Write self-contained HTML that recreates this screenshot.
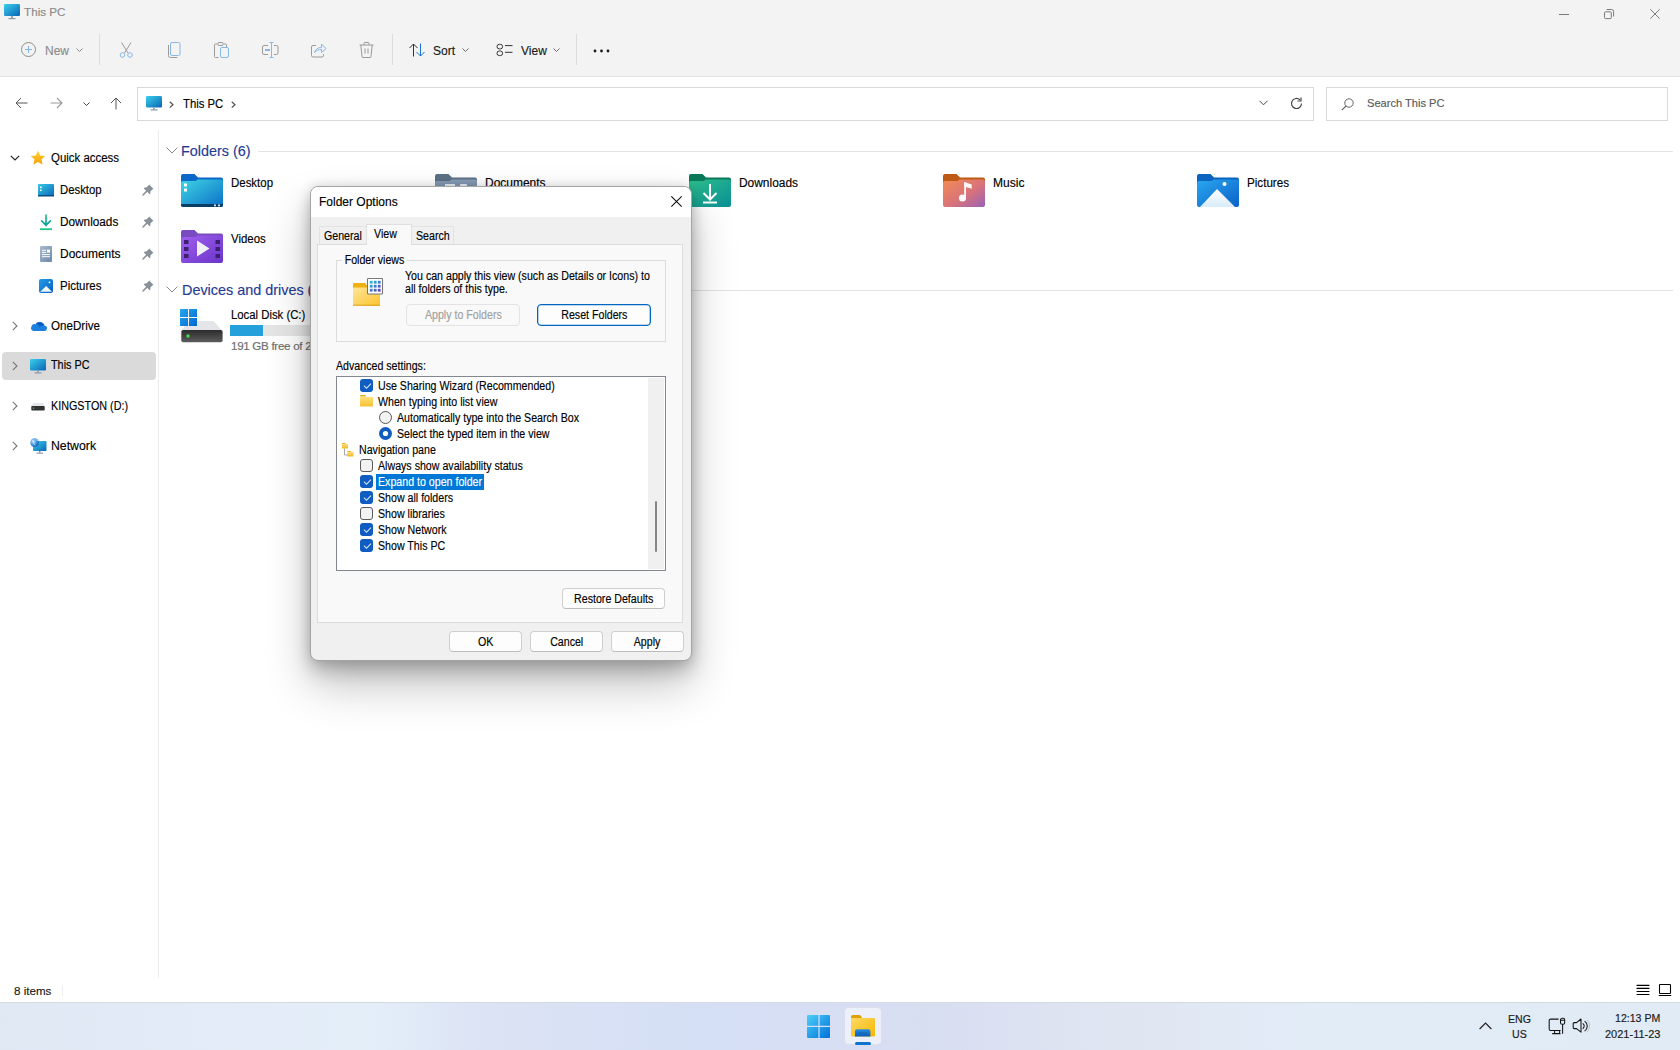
<!DOCTYPE html>
<html><head><meta charset="utf-8">
<style>
*{margin:0;padding:0;box-sizing:border-box}
html,body{-webkit-text-stroke:0.15px currentColor;width:1680px;height:1050px;overflow:hidden;background:#fff;font-family:"Liberation Sans",sans-serif;font-size:12px;color:#000}
.a{position:absolute;white-space:nowrap;line-height:1}
svg{position:absolute;overflow:visible}
#top{position:absolute;left:0;top:0;width:1680px;height:77px;background:#f3f3f3;border-bottom:1px solid #e3e3e3}
.tb{font-size:12px;color:#1c1c1c}
.box{position:absolute;border:1px solid #d9d9d9;background:#fff}
.nav{font-size:12px;color:#000}
.hdr{color:#1f3b94;font-size:14.4px}
.sep{position:absolute;background:#e5e5e5}
.fi{font-size:11.6px;color:#000}
#dlg{position:absolute;left:310px;top:186px;width:382px;height:475px;border:1px solid #a4a4a4;border-radius:8px;background:#f0f0f0;box-shadow:0 10px 18px rgba(0,0,0,.2),0 24px 46px rgba(0,0,0,.24),0 0 12px rgba(0,0,0,.12);overflow:hidden}
.d{font-size:12px;color:#000;transform:scaleX(.886);transform-origin:0 0}
.btn{position:absolute;background:#fdfdfd;border:1px solid #cfcfcf;border-bottom-color:#bdbdbd;border-radius:4px;text-align:center;font-size:12px;color:#000;white-space:nowrap}.btn span{display:inline-block;transform:scaleX(.886)}
.cb{position:absolute;width:13px;height:13px;border-radius:3px;background:#0f5dc0}
.cb:after{content:"";position:absolute;left:3.5px;top:3.8px;width:6px;height:3px;border-left:1px solid rgba(255,255,255,.85);border-bottom:1px solid rgba(255,255,255,.85);transform:rotate(-45deg)}
.cbu{position:absolute;width:13px;height:13px;border-radius:3px;background:#f2f2f2;border:1px solid #5a5a5a}
#task{position:absolute;left:0;top:1002px;width:1680px;height:48px;background:linear-gradient(90deg,#e0e8f4 0%,#e4eef9 22%,#dbe3f4 29%,#d5dff5 42%,#d8def2 55%,#dfe5f1 66%,#e2ecf7 78%,#e1ebf6 100%);border-top:1px solid #d3dae6}
</style></head>
<body>
<div id="top"></div>
<!-- title -->
<svg style="left:4px;top:4px" width="17" height="16" viewBox="0 0 17 16"><defs><linearGradient id="mon" x1="0" y1="0" x2="1" y2="1"><stop offset="0" stop-color="#3ad0ea"/><stop offset="1" stop-color="#0a64b8"/></linearGradient></defs><rect x="0" y="0" width="16" height="12" rx="1.2" fill="url(#mon)"/><rect x="7.2" y="12" width="1.6" height="2" fill="#8a97a5"/><rect x="4.5" y="14" width="7" height="1.2" fill="#8a97a5"/></svg>
<div class="a" style="left:24px;top:6px;font-size:11.7px;color:#8a8a8a">This PC</div>
<!-- window controls -->
<svg style="left:1559px;top:14px" width="10" height="1"><rect x="0" y="0" width="10" height="1" fill="#7b7b7b"/></svg>
<svg style="left:1604px;top:9px" width="10" height="10" viewBox="0 0 10 10"><rect x="0.5" y="2.8" width="6.8" height="6.8" rx="1" fill="none" stroke="#7b7b7b"/><path d="M2.6 0.5h5a2 2 0 0 1 2 2v5" fill="none" stroke="#7b7b7b"/></svg>
<svg style="left:1650px;top:9px" width="10" height="10" viewBox="0 0 10 10"><path d="M0.3 0.3L9.7 9.7M9.7 0.3L0.3 9.7" stroke="#7b7b7b" stroke-width="1"/></svg>
<!-- toolbar -->
<svg style="left:21px;top:42px" width="16" height="16" viewBox="0 0 16 16"><circle cx="7.5" cy="7.5" r="7" fill="none" stroke="#8e8e8e"/><path d="M7.5 4v7M4 7.5h7" stroke="#7fb4e6" stroke-width="1"/></svg>
<div class="a tb" style="left:45px;top:45px;color:#8c8c8c">New</div>
<svg style="left:76px;top:48px" width="7" height="4" viewBox="0 0 7 4"><path d="M0.5 0.5L3.5 3.5L6.5 0.5" fill="none" stroke="#8c8c8c"/></svg>
<div class="sep" style="left:99px;top:34px;width:1px;height:31px;background:#dcdcdc"></div>
<svg style="left:119px;top:42px" width="15" height="16" viewBox="0 0 15 16"><path d="M2.5 0.5L9 11M12 0.5L5.5 11" stroke="#9a9a9a"/><circle cx="3.5" cy="13" r="2.3" fill="none" stroke="#86b8e8"/><circle cx="11" cy="13" r="2.3" fill="none" stroke="#86b8e8"/></svg>
<svg style="left:168px;top:42px" width="13" height="16" viewBox="0 0 13 16"><rect x="2.5" y="0.5" width="9.5" height="13" rx="1.5" fill="none" stroke="#86b8e8"/><path d="M0.5 3v10.5a2 2 0 0 0 2 2h7" fill="none" stroke="#9a9a9a"/></svg>
<svg style="left:214px;top:42px" width="15" height="16" viewBox="0 0 15 16"><path d="M3.5 2h-2a1 1 0 0 0-1 1v11.5a1 1 0 0 0 1 1h3M9.5 2h2a1 1 0 0 1 1 1v2" fill="none" stroke="#9a9a9a"/><rect x="4" y="0.5" width="5" height="3" rx="1" fill="none" stroke="#9a9a9a"/><rect x="6.5" y="5.5" width="8" height="10" rx="1.5" fill="none" stroke="#86b8e8"/></svg>
<svg style="left:262px;top:42px" width="17" height="16" viewBox="0 0 17 16"><path d="M6 3.5h-4a1.5 1.5 0 0 0-1.5 1.5v6a1.5 1.5 0 0 0 1.5 1.5h4M12 3.5h2.5a1.5 1.5 0 0 1 1.5 1.5v6a1.5 1.5 0 0 1-1.5 1.5h-2.5" fill="none" stroke="#9a9a9a"/><path d="M9.5 0.5v15M7.5 0.5h4M7.5 15.5h4" stroke="#86b8e8"/><rect x="3" y="7" width="5" height="2" fill="#86b8e8"/></svg>
<svg style="left:311px;top:43px" width="16" height="15" viewBox="0 0 16 15"><path d="M5 2.5h-3a1.5 1.5 0 0 0-1.5 1.5v8.5a1.5 1.5 0 0 0 1.5 1.5h9a1.5 1.5 0 0 0 1.5-1.5v-1.5" fill="none" stroke="#9a9a9a"/><path d="M3.5 9.5c1-3.5 3.5-5 7-5v-3.5l4.5 4.5l-4.5 4v-3c-3 0-5 1-7 3z" fill="none" stroke="#86b8e8" stroke-linejoin="round"/></svg>
<svg style="left:359px;top:42px" width="15" height="16" viewBox="0 0 15 16"><path d="M0.5 3h14M5 3v-1.5a1 1 0 0 1 1-1h3a1 1 0 0 1 1 1v1.5M1.8 3l1.2 11.5a1 1 0 0 0 1 1h7a1 1 0 0 0 1-1l1.2-11.5M6 6.5v5M9 6.5v5" fill="none" stroke="#9a9a9a"/></svg>
<div class="sep" style="left:392px;top:34px;width:1px;height:31px;background:#dcdcdc"></div>
<svg style="left:409px;top:43px" width="17" height="14" viewBox="0 0 17 14"><path d="M4.5 13.5V1M0.5 5L4.5 1L8.5 5" fill="none" stroke="#333"/><path d="M11.5 0.5V13M7.5 9L11.5 13L15.5 9" fill="none" stroke="#1a73d0"/></svg>
<div class="a tb" style="left:433px;top:45px">Sort</div>
<svg style="left:462px;top:48px" width="7" height="4" viewBox="0 0 7 4"><path d="M0.5 0.5L3.5 3.5L6.5 0.5" fill="none" stroke="#6a6a6a"/></svg>
<svg style="left:496px;top:43px" width="18" height="14" viewBox="0 0 18 14"><rect x="1" y="1.3" width="5.6" height="4.6" rx="2.3" fill="none" stroke="#333"/><rect x="1" y="8" width="5.6" height="4.6" rx="2.3" fill="none" stroke="#333"/><path d="M9 2.6h7.5M9 9.3h7.5" stroke="#333"/></svg>
<div class="a tb" style="left:521px;top:45px">View</div>
<svg style="left:553px;top:48px" width="7" height="4" viewBox="0 0 7 4"><path d="M0.5 0.5L3.5 3.5L6.5 0.5" fill="none" stroke="#6a6a6a"/></svg>
<div class="sep" style="left:576px;top:34px;width:1px;height:31px;background:#dcdcdc"></div>
<svg style="left:593px;top:49px" width="17" height="4" viewBox="0 0 17 4"><circle cx="2" cy="2" r="1.4" fill="#1a1a1a"/><circle cx="8.5" cy="2" r="1.4" fill="#1a1a1a"/><circle cx="15" cy="2" r="1.4" fill="#1a1a1a"/></svg>
<!-- address row -->
<svg style="left:15px;top:97px" width="13" height="12" viewBox="0 0 13 12"><path d="M12.5 6H1M6 1L1 6L6 11" fill="none" stroke="#555" stroke-width="1"/></svg>
<svg style="left:50px;top:97px" width="13" height="12" viewBox="0 0 13 12"><path d="M0.5 6H12M7 1L12 6L7 11" fill="none" stroke="#9a9a9a" stroke-width="1.1"/></svg>
<svg style="left:83px;top:102px" width="7" height="4" viewBox="0 0 7 4"><path d="M0.5 0.5L3.5 3.5L6.5 0.5" fill="none" stroke="#444"/></svg>
<svg style="left:110px;top:97px" width="12" height="13" viewBox="0 0 12 13"><path d="M6 12.5V1M1 6L6 1L11 6" fill="none" stroke="#555" stroke-width="1"/></svg>
<div class="box" style="left:137px;top:87px;width:1177px;height:34px"></div>
<svg style="left:146px;top:96px" width="17" height="15" viewBox="0 0 17 15"><defs><linearGradient id="mon2" x1="0" y1="0" x2="1" y2="1"><stop offset="0" stop-color="#3ad0ea"/><stop offset="1" stop-color="#0a64b8"/></linearGradient></defs><rect x="0" y="0" width="16" height="11.5" rx="1.2" fill="url(#mon2)"/><rect x="7.2" y="11.5" width="1.6" height="2" fill="#8a97a5"/><rect x="4.5" y="13.3" width="7" height="1.2" fill="#8a97a5"/></svg>
<svg style="left:169px;top:101px" width="5" height="8" viewBox="0 0 5 8"><path d="M0.8 0.8L3.9 3.7L0.8 6.6" fill="none" stroke="#555" stroke-width="1.3"/></svg>
<div class="a" style="left:183px;top:97.5px;font-size:12.3px;color:#000;transform:scaleX(.92);transform-origin:0 0">This PC</div>
<svg style="left:231px;top:101px" width="5" height="8" viewBox="0 0 5 8"><path d="M0.8 0.8L3.9 3.7L0.8 6.6" fill="none" stroke="#555" stroke-width="1.3"/></svg>
<svg style="left:1259px;top:100px" width="9" height="6" viewBox="0 0 9 6"><path d="M0.5 0.8L4.5 4.8L8.5 0.8" fill="none" stroke="#444"/></svg>
<svg style="left:1290px;top:97px" width="13" height="13" viewBox="0 0 13 13"><path d="M11.5 6.5a5 5 0 1 1-1.6-3.7" fill="none" stroke="#444" stroke-width="1.2"/><path d="M11 0.5v3.5h-3.5" fill="none" stroke="#444" stroke-width="1.2"/></svg>
<div class="box" style="left:1326px;top:87px;width:342px;height:34px"></div>
<svg style="left:1341px;top:98px" width="13" height="13" viewBox="0 0 13 13"><circle cx="8" cy="5" r="4.2" fill="none" stroke="#666"/><path d="M5 8L0.8 12.2" stroke="#666" stroke-width="1.1"/></svg>
<div class="a" style="left:1367px;top:98px;font-size:11.1px;color:#5a5a5a">Search This PC</div>
<!-- nav pane -->
<div class="sep" style="left:158px;top:130px;width:1px;height:848px;background:#ececec"></div>
<svg style="left:10px;top:155px" width="10" height="6" viewBox="0 0 10 6"><path d="M0.8 0.8L5 5L9.2 0.8" fill="none" stroke="#222" stroke-width="1.2"/></svg>
<svg style="left:30px;top:150px" width="16" height="16" viewBox="0 0 16 16"><defs><linearGradient id="star" x1="0" y1="0" x2="0" y2="1"><stop offset="0" stop-color="#ffd43b"/><stop offset="1" stop-color="#f5a000"/></linearGradient></defs><path d="M8 0.8l2.2 4.6l5 .6l-3.7 3.4l1 5l-4.5-2.5l-4.5 2.5l1-5l-3.7-3.4l5-.6z" fill="url(#star)"/></svg>
<div class="a nav" style="left:51px;top:152.3px;font-size:12px;transform:scaleX(0.953);transform-origin:0 0">Quick access</div>
<svg style="left:38px;top:184px" width="16" height="13" viewBox="0 0 16 13"><defs><linearGradient id="dsk" x1="0" y1="0" x2="1" y2="1"><stop offset="0" stop-color="#38c6e8"/><stop offset="1" stop-color="#0a6ab8"/></linearGradient></defs><rect x="0" y="0" width="16" height="12" rx="1" fill="url(#dsk)"/><rect x="0" y="11" width="16" height="1.5" fill="#0b4c80"/><rect x="2" y="2.5" width="1.6" height="1.6" fill="#fff"/><rect x="2" y="5.5" width="1.6" height="1.6" fill="#fff"/></svg>
<div class="a nav" style="left:59.5px;top:183.5px;font-size:12px;transform:scaleX(0.945);transform-origin:0 0">Desktop</div>
<svg style="left:39px;top:214px" width="14" height="17" viewBox="0 0 14 17"><defs><linearGradient id="dlg2" x1="0" y1="0" x2="0" y2="1"><stop offset="0" stop-color="#22c486"/><stop offset="1" stop-color="#0c9c9a"/></linearGradient></defs><path d="M7 1v10.5M2.6 6.8L7 11.2L11.4 6.8" fill="none" stroke="url(#dlg2)" stroke-width="1.7" stroke-linecap="round" stroke-linejoin="round"/><rect x="1" y="14.3" width="12" height="1.8" fill="#1ec488"/></svg>
<div class="a nav" style="left:59.5px;top:215.6px;font-size:12px;transform:scaleX(0.982);transform-origin:0 0">Downloads</div>
<svg style="left:40px;top:246px" width="12" height="16" viewBox="0 0 12 16"><defs><linearGradient id="doc" x1="0" y1="0" x2="1" y2="1"><stop offset="0" stop-color="#a9bbd0"/><stop offset="1" stop-color="#6d88a8"/></linearGradient></defs><rect x="0" y="0" width="12" height="16" rx="1" fill="url(#doc)"/><path d="M2 4.3h4M2 6.4h4M2 8.6h8M2 10.7h8" stroke="#fff" stroke-width="1"/><rect x="7" y="3.6" width="3" height="3" fill="#fff"/></svg>
<div class="a nav" style="left:59.5px;top:247.6px;font-size:12px;transform:scaleX(0.997);transform-origin:0 0">Documents</div>
<svg style="left:39px;top:279px" width="14" height="14" viewBox="0 0 14 14"><defs><linearGradient id="pic" x1="0" y1="0" x2="1" y2="1"><stop offset="0" stop-color="#1f9ee8"/><stop offset="1" stop-color="#0a5ec0"/></linearGradient><linearGradient id="pmt" x1="0" y1="0" x2="0" y2="1"><stop offset="0" stop-color="#fff"/><stop offset="1" stop-color="#e6f2fc"/></linearGradient></defs><rect x="0" y="0" width="14" height="14" rx="2" fill="url(#pic)"/><path d="M1.2 12.8L7.2 7L13 12.8z" fill="url(#pmt)"/><path d="M10.5 2.2l1.1 1.1l-1.1 1.1l-1.1-1.1z" fill="#fff"/></svg>
<div class="a nav" style="left:59.5px;top:279.6px;font-size:12px;transform:scaleX(0.955);transform-origin:0 0">Pictures</div>
<svg style="left:142px;top:184px" width="12" height="12" viewBox="0 0 12 12"><path d="M7.2 0.6L11.4 4.8L10.4 5.6L8.4 7.6L8.4 9.4L7.6 10.2L1.8 4.4L2.6 3.6L4.4 3.6L6.4 1.6z" fill="#8b9199"/><path d="M4.6 7.4L1 11" stroke="#8b9199" stroke-width="1.5" stroke-linecap="round"/></svg>
<svg style="left:142px;top:216px" width="12" height="12" viewBox="0 0 12 12"><path d="M7.2 0.6L11.4 4.8L10.4 5.6L8.4 7.6L8.4 9.4L7.6 10.2L1.8 4.4L2.6 3.6L4.4 3.6L6.4 1.6z" fill="#8b9199"/><path d="M4.6 7.4L1 11" stroke="#8b9199" stroke-width="1.5" stroke-linecap="round"/></svg>
<svg style="left:142px;top:248px" width="12" height="12" viewBox="0 0 12 12"><path d="M7.2 0.6L11.4 4.8L10.4 5.6L8.4 7.6L8.4 9.4L7.6 10.2L1.8 4.4L2.6 3.6L4.4 3.6L6.4 1.6z" fill="#8b9199"/><path d="M4.6 7.4L1 11" stroke="#8b9199" stroke-width="1.5" stroke-linecap="round"/></svg>
<svg style="left:142px;top:280px" width="12" height="12" viewBox="0 0 12 12"><path d="M7.2 0.6L11.4 4.8L10.4 5.6L8.4 7.6L8.4 9.4L7.6 10.2L1.8 4.4L2.6 3.6L4.4 3.6L6.4 1.6z" fill="#8b9199"/><path d="M4.6 7.4L1 11" stroke="#8b9199" stroke-width="1.5" stroke-linecap="round"/></svg>
<!-- top-level nav -->
<svg style="left:12px;top:321px" width="6" height="10" viewBox="0 0 6 10"><path d="M0.8 0.8L5 5L0.8 9.2" fill="none" stroke="#777" stroke-width="1.1"/></svg>
<svg style="left:30px;top:320px" width="17" height="12" viewBox="0 0 17 12"><path d="M3.3 11h10.8a2.6 2.6 0 0 0 0.5-5.2a4.6 4.6 0 0 0-8.6-1.3a3.2 3.2 0 0 0-2.7 6.5z" fill="#1b80e0"/><path d="M5.2 4.6a4.6 4.6 0 0 1 8.6 1.2a3.5 3.5 0 0 0-4.3 1.5a3 3 0 0 0-4.6-2.5z" fill="#0a5cc0"/></svg>
<div class="a nav" style="left:51px;top:319.6px;font-size:12px;transform:scaleX(0.967);transform-origin:0 0">OneDrive</div>
<div style="position:absolute;left:2px;top:352px;width:154px;height:28px;border-radius:4px;background:#dadada"></div>
<svg style="left:12px;top:361px" width="6" height="10" viewBox="0 0 6 10"><path d="M0.8 0.8L5 5L0.8 9.2" fill="none" stroke="#777" stroke-width="1.1"/></svg>
<svg style="left:30px;top:359px" width="17" height="15" viewBox="0 0 17 15"><defs><linearGradient id="mon3" x1="0" y1="0" x2="1" y2="1"><stop offset="0" stop-color="#3ad0ea"/><stop offset="1" stop-color="#0a64b8"/></linearGradient></defs><rect x="0" y="0" width="16" height="11.5" rx="1.2" fill="url(#mon3)"/><rect x="7.2" y="11.5" width="1.6" height="2" fill="#8a97a5"/><rect x="4.5" y="13.3" width="7" height="1.2" fill="#8a97a5"/></svg>
<div class="a nav" style="left:51px;top:359.4px;font-size:12px;transform:scaleX(0.902);transform-origin:0 0">This PC</div>
<svg style="left:12px;top:401px" width="6" height="10" viewBox="0 0 6 10"><path d="M0.8 0.8L5 5L0.8 9.2" fill="none" stroke="#777" stroke-width="1.1"/></svg>
<svg style="left:31px;top:402px" width="14" height="9" viewBox="0 0 14 9"><path d="M2 1h10l1.5 3h-13z" fill="#e4e6ea"/><rect x="0.3" y="4" width="13.4" height="4.6" rx="0.8" fill="#333"/><rect x="1.8" y="5.6" width="1.4" height="1.2" fill="#3ad04a"/></svg>
<div class="a nav" style="left:51px;top:399.6px;font-size:12px;transform:scaleX(0.898);transform-origin:0 0">KINGSTON (D:)</div>
<svg style="left:12px;top:441px" width="6" height="10" viewBox="0 0 6 10"><path d="M0.8 0.8L5 5L0.8 9.2" fill="none" stroke="#777" stroke-width="1.1"/></svg>
<svg style="left:30px;top:438px" width="17" height="17" viewBox="0 0 17 17"><defs><linearGradient id="net" x1="0" y1="0" x2="1" y2="1"><stop offset="0" stop-color="#3ad0ea"/><stop offset="1" stop-color="#0a64b8"/></linearGradient><radialGradient id="glb" cx="0.35" cy="0.35" r="0.7"><stop offset="0" stop-color="#bfe4ff"/><stop offset="0.6" stop-color="#3a90e0"/><stop offset="1" stop-color="#1a5eb0"/></radialGradient></defs><rect x="3" y="3" width="13.5" height="10" rx="1" fill="url(#net)"/><rect x="9" y="13" width="1.5" height="1.8" fill="#8a97a5"/><rect x="6.5" y="14.6" width="6.5" height="1.1" fill="#8a97a5"/><circle cx="4.6" cy="4.6" r="4.3" fill="url(#glb)"/><path d="M2.2 2.5c1.2 0.3 2 1.2 1.6 2.4c-0.3 0.9 0.6 1.6 1.4 2.4M6 0.8c-0.2 1 0.6 1.6 1.8 1.8" fill="none" stroke="#e6f4ff" stroke-width="0.9" opacity=".8"/></svg>
<div class="a nav" style="left:51px;top:439.6px;font-size:12px;transform:scaleX(1.023);transform-origin:0 0">Network</div>
<!-- content -->
<svg style="left:166px;top:147px" width="12" height="7" viewBox="0 0 12 7"><path d="M0.6 0.6L6 6L11.4 0.6" fill="none" stroke="#8a8a8a" stroke-width="1"/></svg>
<div class="a hdr" style="left:181px;top:144px">Folders (6)</div>
<div class="sep" style="left:258px;top:151px;width:1415px;height:1px;background:#e3e3e3"></div>
<svg style="left:166px;top:286px" width="12" height="7" viewBox="0 0 12 7"><path d="M0.6 0.6L6 6L11.4 0.6" fill="none" stroke="#8a8a8a" stroke-width="1"/></svg>
<div class="a hdr" style="left:182px;top:283px">Devices and drives (1)</div>
<div class="sep" style="left:330px;top:290px;width:1343px;height:1px;background:#e3e3e3"></div>
<!-- folder icons -->
<svg style="left:181px;top:174px" width="42" height="33" viewBox="0 0 42 33"><defs><linearGradient id="fdesk" x1="0" y1="0" x2="1" y2="1"><stop offset="0" stop-color="#3fd6e4"/><stop offset="1" stop-color="#0c6ec8"/></linearGradient></defs><path d="M0 2a2 2 0 0 1 2-2h11.5l3.5 3.5h23a2 2 0 0 1 2 2v4H0z" fill="#0a68c8"/><path d="M0 9a2 2 0 0 1 2-2h12.5l2.2-1.6h23.3a2 2 0 0 1 2 2v23.6a2 2 0 0 1-2 2H2a2 2 0 0 1-2-2z" fill="url(#fdesk)"/><path d="M0 30h42v1a2 2 0 0 1-2 2H2a2 2 0 0 1-2-2z" fill="#0a3e66"/><rect x="3" y="9.5" width="3" height="3" fill="#fff"/><rect x="3" y="14.5" width="3" height="3" fill="#fff"/><rect x="33" y="30.5" width="2" height="1.8" fill="#d8e4ee"/><rect x="37" y="30.5" width="2" height="1.8" fill="#d8e4ee"/></svg>
<div class="a fi" style="left:231px;top:176.6px;font-size:12px;transform:scaleX(0.954);transform-origin:0 0">Desktop</div>
<svg style="left:435px;top:174px" width="42" height="34" viewBox="0 0 42 34"><defs><linearGradient id="fdoc" x1="0" y1="0" x2="0" y2="1"><stop offset="0" stop-color="#8aa0b8"/><stop offset="1" stop-color="#5a7390"/></linearGradient></defs><path d="M0 2a2 2 0 0 1 2-2h11.5l3.5 3.5h23a2 2 0 0 1 2 2v4H0z" fill="#5d7186"/><path d="M0 9a2 2 0 0 1 2-2h12.5l2.2-1.6h23.3a2 2 0 0 1 2 2v24.6a2 2 0 0 1-2 2H2a2 2 0 0 1-2-2z" fill="url(#fdoc)"/><rect x="10" y="10" width="10" height="2" fill="#e8eef4"/><rect x="25" y="10" width="7" height="3" rx="1" fill="#e8eef4"/></svg>
<div class="a fi" style="left:485px;top:176.6px;font-size:12px;transform:scaleX(0.997);transform-origin:0 0">Documents</div>
<svg style="left:689px;top:174px" width="42" height="33" viewBox="0 0 42 33"><defs><linearGradient id="fdl" x1="0" y1="0" x2="1" y2="1"><stop offset="0" stop-color="#2ec08c"/><stop offset="1" stop-color="#0a8f96"/></linearGradient></defs><path d="M0 2a2 2 0 0 1 2-2h11.5l3.5 3.5h23a2 2 0 0 1 2 2v4H0z" fill="#0b7a5a"/><path d="M0 9a2 2 0 0 1 2-2h12.5l2.2-1.6h23.3a2 2 0 0 1 2 2v23.6a2 2 0 0 1-2 2H2a2 2 0 0 1-2-2z" fill="url(#fdl)"/><path d="M21 10v15M14.5 19l6.5 6.5l6.5-6.5" fill="none" stroke="#fff" stroke-width="2"/><rect x="14" y="27.5" width="14" height="2" fill="#fff"/></svg>
<div class="a fi" style="left:739px;top:176.6px;font-size:12px;transform:scaleX(0.994);transform-origin:0 0">Downloads</div>
<svg style="left:943px;top:174px" width="42" height="33" viewBox="0 0 42 33"><defs><linearGradient id="fmu" x1="0" y1="0" x2="1" y2="1"><stop offset="0" stop-color="#f38c52"/><stop offset="0.55" stop-color="#d8737a"/><stop offset="1" stop-color="#9a62b8"/></linearGradient></defs><path d="M0 2a2 2 0 0 1 2-2h11.5l3.5 3.5h23a2 2 0 0 1 2 2v4H0z" fill="#bf5a14"/><path d="M0 9a2 2 0 0 1 2-2h12.5l2.2-1.6h23.3a2 2 0 0 1 2 2v23.6a2 2 0 0 1-2 2H2a2 2 0 0 1-2-2z" fill="url(#fmu)"/><circle cx="19.5" cy="24" r="3.6" fill="#fafafa"/><path d="M22.1 24V8.5" stroke="#fafafa" stroke-width="1.8"/><path d="M21.2 8l7.5 2.5v4.2l-7.5-2.3z" fill="#fafafa"/></svg>
<div class="a fi" style="left:993px;top:176.6px;font-size:12px;transform:scaleX(1.002);transform-origin:0 0">Music</div>
<svg style="left:1197px;top:174px" width="42" height="33" viewBox="0 0 42 33"><defs><linearGradient id="fpi" x1="0" y1="0" x2="1" y2="1"><stop offset="0" stop-color="#2aa8f0"/><stop offset="1" stop-color="#0a60c8"/></linearGradient><linearGradient id="mtn" x1="0" y1="0" x2="0" y2="1"><stop offset="0" stop-color="#fff"/><stop offset="1" stop-color="#d8ecfa"/></linearGradient></defs><path d="M0 2a2 2 0 0 1 2-2h11.5l3.5 3.5h23a2 2 0 0 1 2 2v4H0z" fill="#0a64c0"/><path d="M0 9a2 2 0 0 1 2-2h12.5l2.2-1.6h23.3a2 2 0 0 1 2 2v23.6a2 2 0 0 1-2 2H2a2 2 0 0 1-2-2z" fill="url(#fpi)"/><path d="M3 33L20 15L38 33z" fill="url(#mtn)"/><circle cx="27.5" cy="10" r="2" fill="#fff"/></svg>
<div class="a fi" style="left:1247px;top:176.6px;font-size:12px;transform:scaleX(0.969);transform-origin:0 0">Pictures</div>
<svg style="left:181px;top:230px" width="42" height="33" viewBox="0 0 42 33"><defs><linearGradient id="fvi" x1="0" y1="0" x2="1" y2="1"><stop offset="0" stop-color="#a060f0"/><stop offset="1" stop-color="#6a34c8"/></linearGradient></defs><path d="M0 2a2 2 0 0 1 2-2h11.5l3.5 3.5h23a2 2 0 0 1 2 2v4H0z" fill="#7a4ac0"/><path d="M0 9a2 2 0 0 1 2-2h12.5l2.2-1.6h23.3a2 2 0 0 1 2 2v23.6a2 2 0 0 1-2 2H2a2 2 0 0 1-2-2z" fill="url(#fvi)"/><g fill="#3c2070"><rect x="3" y="10" width="4.5" height="4"/><rect x="3" y="17" width="4.5" height="4"/><rect x="3" y="24" width="4.5" height="4"/><rect x="34.5" y="10" width="4.5" height="4"/><rect x="34.5" y="17" width="4.5" height="4"/><rect x="34.5" y="24" width="4.5" height="4"/></g><path d="M16 10.5v16l12.5-8z" fill="#f0f0f5"/></svg>
<div class="a fi" style="left:231px;top:232.6px;font-size:12px;transform:scaleX(0.951);transform-origin:0 0">Videos</div>
<!-- local disk -->
<svg style="left:180px;top:308px" width="44" height="35" viewBox="0 0 44 35"><defs><linearGradient id="win" gradientUnits="userSpaceOnUse" x1="0" y1="1" x2="17" y2="18"><stop offset="0" stop-color="#28a8ec"/><stop offset="1" stop-color="#0066d2"/></linearGradient><linearGradient id="drv" x1="0" y1="0" x2="0" y2="1"><stop offset="0" stop-color="#2c2c2c"/><stop offset="1" stop-color="#5c5c5c"/></linearGradient></defs><path d="M9 13H33.6L41.6 22H1.5z" fill="#e3e5e9"/><rect x="1.3" y="22" width="41.3" height="12.2" rx="1.8" fill="url(#drv)"/><circle cx="8" cy="28" r="1.7" fill="#40e040"/><g fill="url(#win)"><rect x="0" y="1" width="8" height="8"/><rect x="9" y="1" width="8" height="8"/><rect x="0" y="10" width="8" height="8"/><rect x="9" y="10" width="8" height="8"/></g></svg>
<div class="a fi" style="left:231px;top:308.5px;font-size:12px;transform:scaleX(0.944);transform-origin:0 0">Local Disk (C:)</div>
<div style="position:absolute;left:230px;top:325px;width:200px;height:11px;background:#e6e6e6"></div>
<div style="position:absolute;left:230px;top:325px;width:33px;height:11px;background:#26a0da"></div>
<div class="a fi" style="left:231px;top:340px;color:#6d6d6d;letter-spacing:-0.3px">191 GB free of 237 GB</div>
<!-- status bar -->
<div class="a" style="left:14px;top:985px;font-size:11.6px;color:#1a1a1a">8 items</div>
<div class="sep" style="left:62px;top:985px;width:1px;height:11px;background:#efefef"></div>
<svg style="left:1636px;top:984px" width="14" height="12" viewBox="0 0 14 12"><path d="M1 1.4h12M1 4.4h12M1 7.5h12M1 10.5h12" stroke="#000" stroke-width="1.1" stroke-linecap="round"/></svg>
<svg style="left:1658px;top:983px" width="14" height="14" viewBox="0 0 14 14"><rect x="1.5" y="1.5" width="11" height="9" rx="0.8" fill="none" stroke="#000" stroke-width="1.1"/><path d="M1.2 12.5h11.6" stroke="#000" stroke-width="1.1" stroke-linecap="round"/></svg>
<!-- dialog -->
<div id="dlg">
 <div style="position:absolute;left:0;top:0;width:380px;height:30px;background:#fff"></div>
</div>
<div class="a" style="left:319px;top:196px;font-size:12px;color:#000">Folder Options</div>
<svg style="left:671px;top:196px" width="11" height="11" viewBox="0 0 10 10"><path d="M0.3 0.3L9.7 9.7M9.7 0.3L0.3 9.7" stroke="#111" stroke-width="1"/></svg>
<!-- tabs -->
<div style="position:absolute;left:319px;top:226px;width:48px;height:19px;border:1px solid #e3e3e3;border-bottom:none;background:#f0f0f0"></div>
<div style="position:absolute;left:411px;top:226px;width:43px;height:19px;border:1px solid #e3e3e3;border-bottom:none;background:#f0f0f0"></div>
<div style="position:absolute;left:317px;top:244px;width:366px;height:379px;border:1px solid #dcdcdc;background:#f9f9f9"></div>
<div style="position:absolute;left:366px;top:224px;width:46px;height:21px;border:1px solid #e0e0e0;border-bottom:none;background:#f9f9f9"></div>
<div class="a d" style="left:324px;top:230px">General</div>
<div class="a d" style="left:374px;top:228px">View</div>
<div class="a d" style="left:416px;top:230px">Search</div>
<!-- folder views group -->
<div style="position:absolute;left:336px;top:260px;width:330px;height:82px;border:1px solid #dcdcdc"></div>
<div class="a d" style="left:342px;top:254px;background:#f9f9f9;padding:0 3px">Folder views</div>
<svg style="left:352px;top:278px" width="32" height="29" viewBox="0 0 32 29"><defs><linearGradient id="yf" x1="0" y1="0" x2="1" y2="1"><stop offset="0" stop-color="#ffe69a"/><stop offset="1" stop-color="#fcc22a"/></linearGradient><linearGradient id="gc" gradientUnits="userSpaceOnUse" x1="17" y1="2" x2="29" y2="14"><stop offset="0" stop-color="#22d0e0"/><stop offset="0.5" stop-color="#3a80c8"/><stop offset="1" stop-color="#6a30b0"/></linearGradient></defs><path d="M1 6a1 1 0 0 1 1-1h11l2 2.5h10v3H1z" fill="#f0b010"/><path d="M1 10.5a1 1 0 0 1 1-1h25a1 1 0 0 1 1 1v16.5a1 1 0 0 1-1 1H2a1 1 0 0 1-1-1z" fill="url(#yf)"/><path d="M1 27.2h27" stroke="#d09a20" stroke-width="0.8"/><rect x="15.5" y="0.5" width="15" height="15.5" rx="0.8" fill="#fff" stroke="#777" stroke-width="1.1"/><g fill="url(#gc)"><rect x="17.8" y="2.8" width="2.8" height="2.8"/><rect x="21.8" y="2.8" width="2.8" height="2.8"/><rect x="25.8" y="2.8" width="2.8" height="2.8"/><rect x="17.8" y="6.8" width="2.8" height="2.8"/><rect x="21.8" y="6.8" width="2.8" height="2.8"/><rect x="25.8" y="6.8" width="2.8" height="2.8"/><rect x="17.8" y="10.8" width="2.8" height="2.8"/><rect x="21.8" y="10.8" width="2.8" height="2.8"/><rect x="25.8" y="10.8" width="2.8" height="2.8"/></g></svg>
<div class="a d" style="left:405px;top:270px">You can apply this view (such as Details or Icons) to</div>
<div class="a d" style="left:405px;top:283px">all folders of this type.</div>
<div class="btn" style="left:406px;top:304px;width:114px;height:22px;line-height:20px;color:#a0a0a0;border-color:#e3e3e3;background:#f9f9f9"><span>Apply to Folders</span></div>
<div class="btn" style="left:537px;top:304px;width:114px;height:22px;line-height:20px;border-color:#0067c0;border-width:1px;box-shadow:inset 0 0 0 0.3px #0067c0"><span>Reset Folders</span></div>
<div class="a d" style="left:336px;top:360px">Advanced settings:</div>
<!-- listbox -->
<div style="position:absolute;left:336px;top:376px;width:330px;height:195px;border:1px solid #828790;background:#fff"></div>
<div style="position:absolute;left:648px;top:378px;width:16px;height:191px;background:#f0f0f0"></div>
<div style="position:absolute;left:655px;top:501px;width:2px;height:51px;background:#858585;border-radius:1px"></div>
<div class="cb" style="left:360px;top:379px"></div>
<div class="a d" style="left:378px;top:380px">Use Sharing Wizard (Recommended)</div>
<svg style="left:360px;top:395px" width="13" height="12" viewBox="0 0 13 12"><defs><linearGradient id="yf2" x1="0" y1="0" x2="0" y2="1"><stop offset="0" stop-color="#ffe07a"/><stop offset="1" stop-color="#f5c030"/></linearGradient></defs><path d="M0 1a1 1 0 0 1 1-1h4l1.5 1.5h-6.5z" fill="#e9a915"/><rect x="0" y="2" width="13" height="9.5" rx="0.8" fill="url(#yf2)"/></svg>
<div class="a d" style="left:378px;top:396px">When typing into list view</div>
<svg style="left:379px;top:411px" width="13" height="13" viewBox="0 0 13 13"><circle cx="6.5" cy="6.5" r="6" fill="#f3f3f3" stroke="#555" stroke-width="1"/></svg>
<div class="a d" style="left:397px;top:412px">Automatically type into the Search Box</div>
<svg style="left:379px;top:427px" width="13" height="13" viewBox="0 0 13 13"><circle cx="6.5" cy="6.5" r="6.5" fill="#0f5dc0"/><circle cx="6.5" cy="6.5" r="2.6" fill="#fff"/></svg>
<div class="a d" style="left:397px;top:428px">Select the typed item in the view</div>
<svg style="left:341px;top:442px" width="14" height="16" viewBox="0 0 14 16"><defs><linearGradient id="nf" x1="0" y1="0" x2="0" y2="1"><stop offset="0" stop-color="#ffe08a"/><stop offset="1" stop-color="#f2b81e"/></linearGradient></defs><path d="M3.5 6.5v6.5h3.5" fill="none" stroke="#a8a8a8" stroke-width="1"/><path d="M1 1.6a.6 .6 0 0 1 .6-.6h2.4l1 1h-4z" fill="#eaa800"/><rect x="1" y="1.8" width="6" height="4.6" rx="0.4" fill="url(#nf)"/><path d="M6.3 9.6a.6 .6 0 0 1 .6-.6h2.4l1 1h-4z" fill="#eaa800"/><rect x="6.3" y="9.8" width="6.2" height="4.6" rx="0.4" fill="url(#nf)"/></svg>
<div class="a d" style="left:359px;top:444px">Navigation pane</div>
<div class="cbu" style="left:360px;top:459px"></div>
<div class="a d" style="left:378px;top:460px">Always show availability status</div>
<div style="position:absolute;left:376px;top:474px;width:108px;height:16px;background:#0078d7"></div>
<div class="cb" style="left:360px;top:475px"></div>
<div class="a d" style="left:378px;top:476px;color:#fff">Expand to open folder</div>
<div class="cb" style="left:360px;top:491px"></div>
<div class="a d" style="left:378px;top:492px">Show all folders</div>
<div class="cbu" style="left:360px;top:507px"></div>
<div class="a d" style="left:378px;top:508px">Show libraries</div>
<div class="cb" style="left:360px;top:523px"></div>
<div class="a d" style="left:378px;top:524px">Show Network</div>
<div class="cb" style="left:360px;top:539px"></div>
<div class="a d" style="left:378px;top:540px">Show This PC</div>
<!-- buttons -->
<div class="btn" style="left:562px;top:588px;width:103px;height:21px;line-height:19px;padding-top:1px"><span>Restore Defaults</span></div>
<div class="btn" style="left:449px;top:631px;width:73px;height:21px;line-height:19px;padding-top:1px"><span>OK</span></div>
<div class="btn" style="left:530px;top:631px;width:73px;height:21px;line-height:19px;padding-top:1px"><span>Cancel</span></div>
<div class="btn" style="left:611px;top:631px;width:73px;height:21px;line-height:19px;padding-top:1px"><span>Apply</span></div>
<!-- taskbar -->
<div id="task"></div>
<svg style="left:807px;top:1015px" width="23" height="23" viewBox="0 0 23 23"><defs><linearGradient id="st" x1="0" y1="0" x2="1" y2="1"><stop offset="0" stop-color="#4cd0fa"/><stop offset="1" stop-color="#0070d8"/></linearGradient></defs><path d="M0 1a1 1 0 0 1 1-1h10.4v10.8H0z M12.6 0h9.4a1 1 0 0 1 1 1v9.8H12.6z M0 12h11.4v11H1a1 1 0 0 1-1-1z M12.6 12H23v10a1 1 0 0 1-1 1H12.6z" fill="url(#st)"/></svg>
<div style="position:absolute;left:844px;top:1007px;width:38px;height:38px;border-radius:5px;background:rgba(255,255,255,.55);border:1px solid rgba(0,0,40,.07)"></div>
<svg style="left:851px;top:1015px" width="24" height="22" viewBox="0 0 24 22"><defs><linearGradient id="ex" x1="0" y1="0" x2="1" y2="1"><stop offset="0" stop-color="#ffd966"/><stop offset="1" stop-color="#f5b800"/></linearGradient><linearGradient id="ex2" x1="0" y1="0" x2="0" y2="1"><stop offset="0" stop-color="#2a8ee0"/><stop offset="1" stop-color="#0a5cb8"/></linearGradient></defs><path d="M0 2a2 2 0 0 1 2-2h7l2 2.5v2.5H0z" fill="#dca000"/><rect x="0" y="3" width="24" height="18.5" rx="0.8" fill="url(#ex)"/><path d="M4 21.5v-5.2a2 2 0 0 1 2-2h11.4a2 2 0 0 1 2 2v5.2z" fill="url(#ex2)"/><rect x="7.5" y="17.3" width="8.5" height="1.2" fill="#1a5aa0" opacity=".6"/></svg>
<div style="position:absolute;left:855px;top:1042px;width:16px;height:3px;border-radius:1.5px;background:#0a74d0"></div>
<svg style="left:1479px;top:1022px" width="13" height="8" viewBox="0 0 13 8"><path d="M0.6 7L6.5 1L12.4 7" fill="none" stroke="#222" stroke-width="1.2"/></svg>
<div class="a" style="left:1508px;top:1013.5px;font-size:10.6px;color:#1a1a1a">ENG</div>
<div class="a" style="left:1512px;top:1029px;font-size:10.6px;color:#1a1a1a">US</div>
<svg style="left:1548px;top:1017px" width="18" height="18" viewBox="0 0 18 18"><path d="M10.6 2.1H2.6a1.4 1.4 0 0 0-1.4 1.4v8.6a1.4 1.4 0 0 0 1.4 1.4h9.9" fill="none" stroke="#111" stroke-width="1.05"/><path d="M6.6 13.6v3M11.6 13.6v3M4.2 16.6h8.3" stroke="#111" stroke-width="1.05"/><rect x="12.5" y="1.3" width="4.2" height="6" rx="1.6" fill="none" stroke="#111" stroke-width="1.05"/><path d="M12.6 3.2h4M14.6 7.3v9.4" stroke="#111" stroke-width="1.05"/></svg>
<svg style="left:1572px;top:1019px" width="18" height="14" viewBox="0 0 18 14"><path d="M1.2 4.6a1 1 0 0 1 1-1h2.3l4.5-3.6v13.2l-4.5-3.6h-2.3a1 1 0 0 1-1-1z" fill="none" stroke="#111" stroke-width="1.05" stroke-linejoin="round"/><path d="M10.7 4.4a3.2 3.2 0 0 1 0 5.4M12.6 2.1a6 6 0 0 1 0 10" fill="none" stroke="#111" stroke-width="1.05"/><path d="M14.6 0.8a8 8 0 0 1 0 12.6" fill="none" stroke="#bbb" stroke-width="0.9"/></svg>
<div class="a" style="left:1615px;top:1013px;font-size:10.6px;color:#1a1a1a">12:13 PM</div>
<div class="a" style="left:1605px;top:1028.5px;font-size:11px;color:#1a1a1a">2021-11-23</div>
</body></html>
